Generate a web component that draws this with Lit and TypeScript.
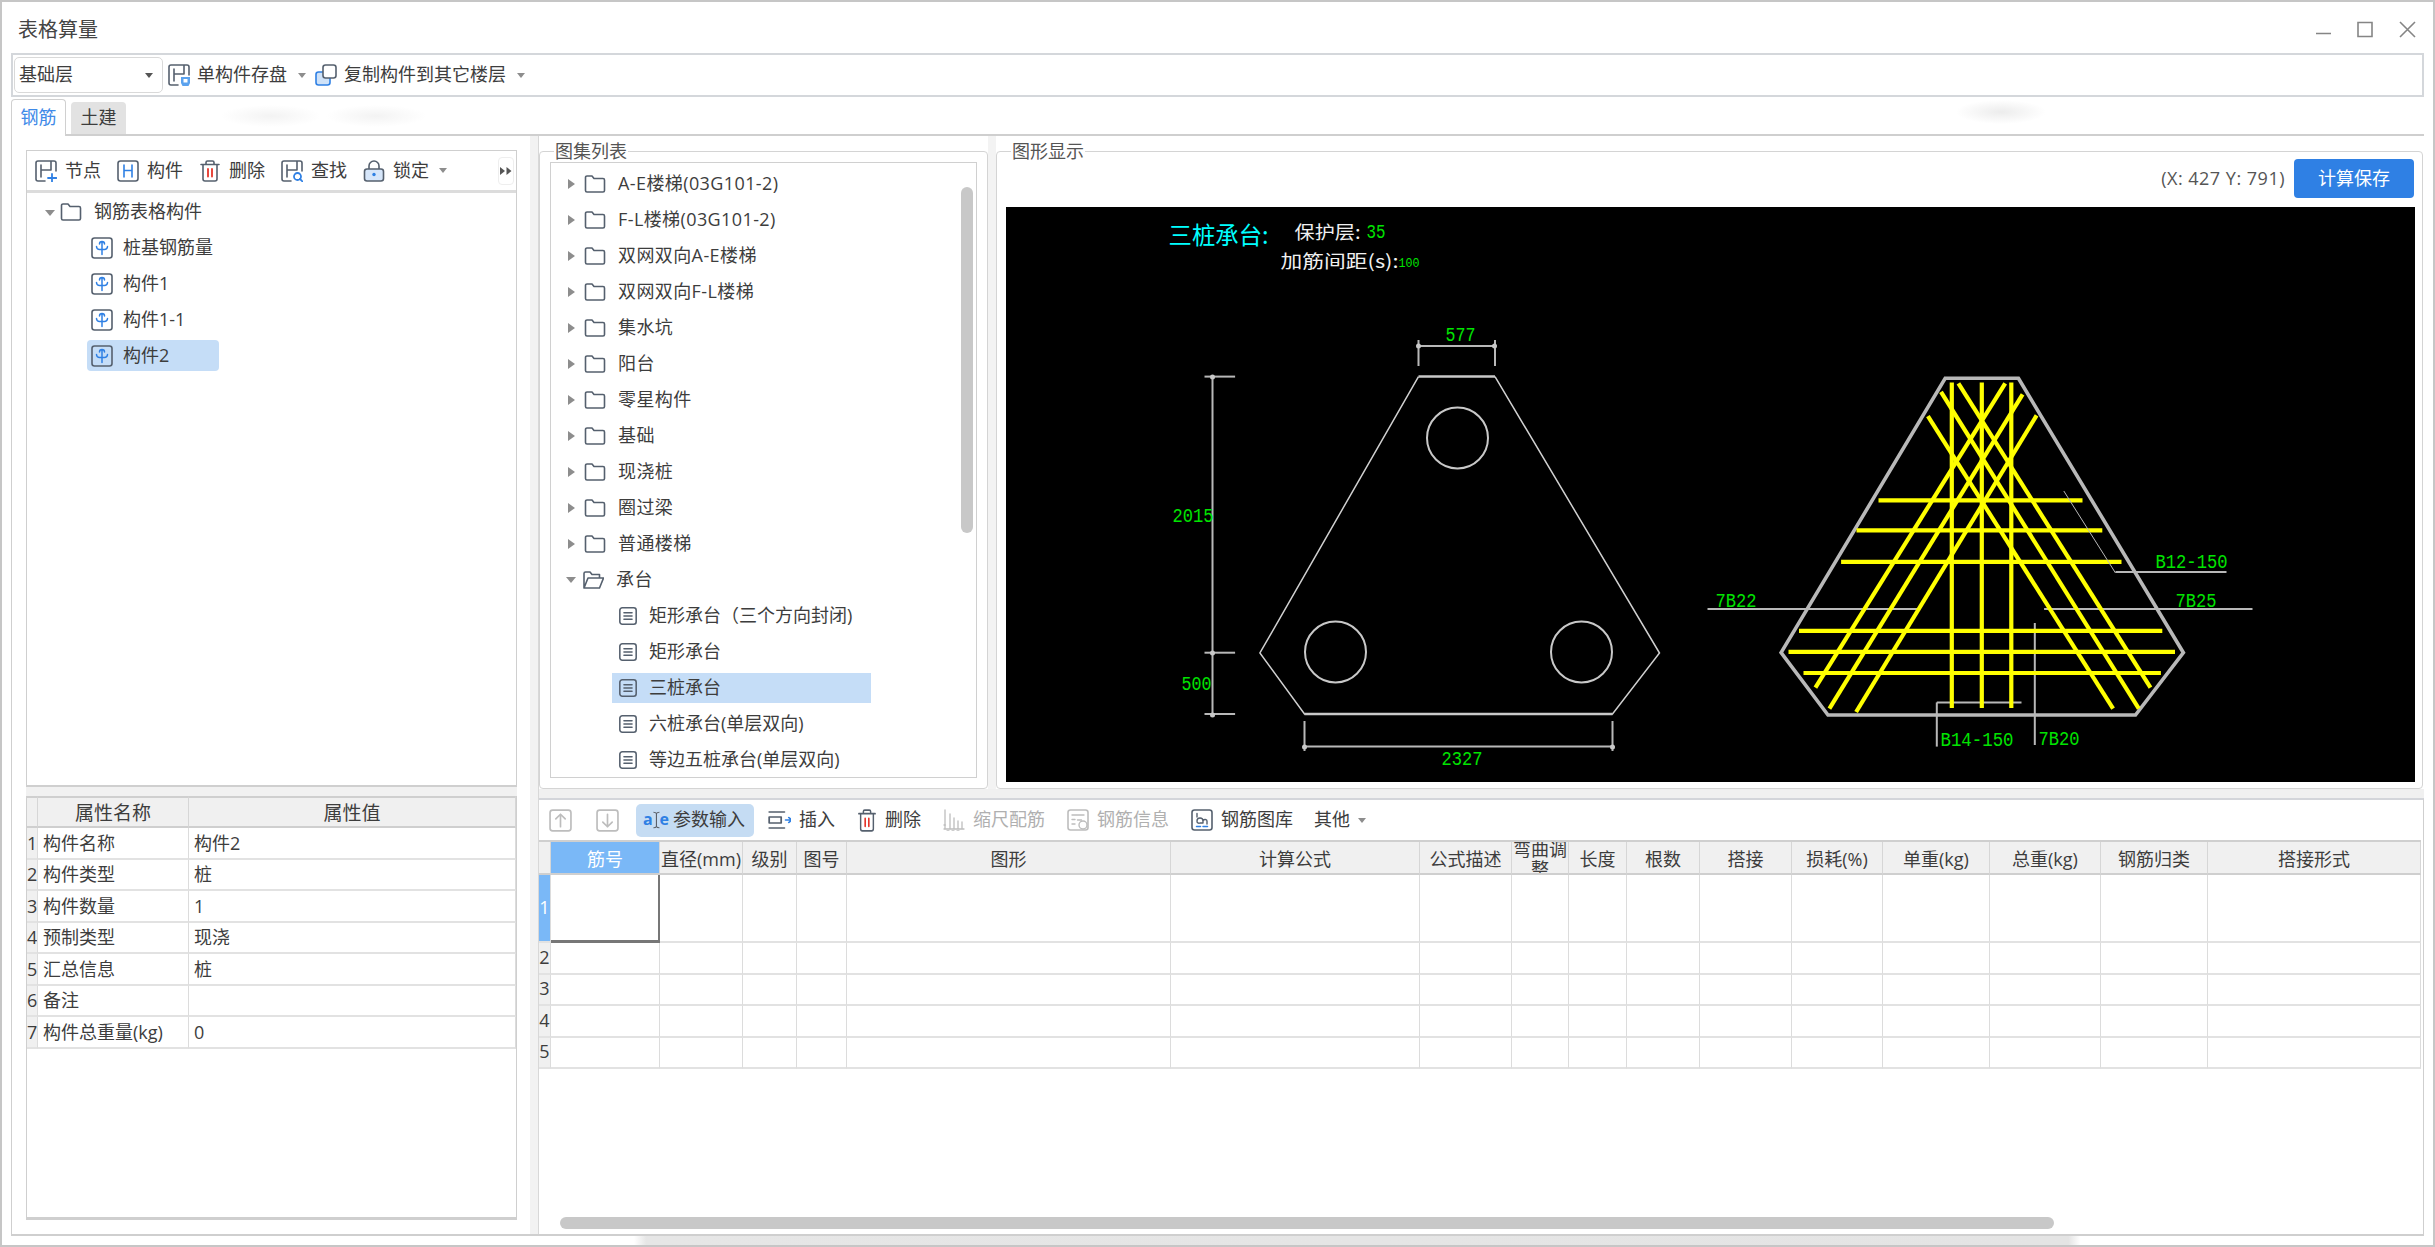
import { LitElement, html, css, svg } from "lit";
import { customElement } from "lit/decorators.js";

const DARK = "#55606e";
const BLUE = "#2f80e4";
const RED = "#e5352b";
const LIGHT = "#bdbdbd";

const stroke = (c: string, w = 1.6) => `fill:none;stroke:${c};stroke-width:${w};stroke-linecap:round;stroke-linejoin:round`;

// toolbar and tree icons, all drawn on a 22 box unless the caller changes the size
const ICONS: Record<string, unknown> = {
  node: svg`<path style=${stroke(DARK)} d="M10 21H3a2 2 0 0 1-2-2V3a2 2 0 0 1 2-2h16a2 2 0 0 1 2 2v8M6 5v12M6 10h10M16 1v9"/><path style=${stroke(BLUE, 1.8)} d="M17 14v8M13 18h8.5"/>`,
  comp: svg`<rect x="1" y="1" width="20" height="20" rx="2.5" style=${stroke(DARK)}/><path style=${stroke(BLUE)} d="M7 5v12M15 5v12M7 10.5h8"/>`,
  trash: svg`<path style=${stroke(DARK)} d="M7 4V2.5A1.5 1.5 0 0 1 8.5 1h5A1.5 1.5 0 0 1 15 2.5V4M2 4.500h18M4 4.500V19a2 2 0 0 0 2 2h10a2 2 0 0 0 2-2V4.500"/><path style=${stroke(RED, 1.8)} d="M9 9v7.5M13 9v7.5"/>`,
  find: svg`<path style=${stroke(DARK)} d="M10 21H3a2 2 0 0 1-2-2V3a2 2 0 0 1 2-2h16a2 2 0 0 1 2 2v8M6 5v12M6 10h10M16 1v9"/><circle cx="16.5" cy="16.5" r="3.5" style=${stroke(BLUE, 1.8)}/><path style=${stroke(BLUE, 1.8)} d="M19 19l2.5 2.5"/>`,
  lock: svg`<path style=${stroke(DARK)} d="M6 9V6a5 5 0 0 1 10 0v3"/><rect x="1.5" y="9" width="19" height="12" rx="2.5" fill="#d6e6fa" stroke=${DARK} stroke-width="1.6"/><circle cx="11" cy="14.5" r="1.7" fill=${BLUE}/>`,
  save: svg`<path style=${stroke(DARK)} d="M10 21H3a2 2 0 0 1-2-2V3a2 2 0 0 1 2-2h16a2 2 0 0 1 2 2v8M6 5v12M6 10h10M16 1v9"/><path fill="#5ba2ee" d="M13 13h9v6l-1.5 3h-6L13 19z"/><rect x="15.5" y="15" width="4" height="3.5" fill="#fff"/>`,
  copy: svg`<rect x="1" y="8" width="14" height="13" rx="2.5" fill="#cfe2f8" stroke=${BLUE} stroke-width="1.6"/><rect x="8" y="1" width="13" height="13" rx="2.5" fill="#fff" stroke=${DARK} stroke-width="1.6"/>`,
  leaf: svg`<rect x="1" y="1" width="20" height="20" rx="2.5" style=${stroke(DARK)}/><path style=${stroke(BLUE, 1.5)} d="M11 5v12.5M5.500 9.500a3 3 0 0 0 3 3h5a3 3 0 0 0 3-3M8.500 7a2.500 2.500 0 0 1 5 0"/>`,
  folder: svg`<path style=${stroke(DARK)} d="M1.500 6v11.500a1.500 1.500 0 0 0 1.500 1.500h16a1.500 1.500 0 0 0 1.500-1.500V7A1.500 1.500 0 0 0 19 5.500H10L8 3H3A1.500 1.500 0 0 0 1.500 4.500z"/>`,
  open: svg`<path style=${stroke(DARK)} d="M2 19V4.500A1.500 1.500 0 0 1 3.500 3H8l2 2.500h7.500V9M2 19h15.500L21.500 9H6z"/>`,
  doc: svg`<rect x="1" y="1" width="20" height="20" rx="3" style=${stroke(DARK, 1.9)}/><path style=${stroke(DARK, 1.7)} d="M6 7h10M6 11h10M6 15h10"/>`,
  up: svg`<rect x="1" y="1" width="20" height="20" rx="2.5" style=${stroke(LIGHT)}/><path style=${stroke(LIGHT)} d="M11 17V5M6.500 9.500L11 5l4.500 4.500"/>`,
  down: svg`<rect x="1" y="1" width="20" height="20" rx="2.5" style=${stroke(LIGHT)}/><path style=${stroke(LIGHT)} d="M11 5v12M6.500 12.500L11 17l4.500-4.500"/>`,
  insert: svg`<path style=${stroke(DARK)} d="M2 3h14M2 8h11v6H2zM2 19h14"/><path style=${stroke(BLUE)} d="M17 11h5M20 8.500l2.500 2.500-2.500 2.500"/>`,
  scale: svg`<path style=${stroke(LIGHT, 1.3)} d="M2 1v18M7 5v14M11 9v10M15 12v7M19 13v6M1 16h1.500M1 20h20" /><path style=${stroke(LIGHT, 1.3)} d="M4 22h2M9 22h2M14 22h2"/>`,
  info: svg`<rect x="1" y="1" width="20" height="20" rx="2.5" style=${stroke(LIGHT)}/><path style=${stroke(LIGHT, 1.4)} d="M5 6h12M5 10.500h3M5 15h3M10.500 11h4"/><circle cx="16" cy="16" r="4" fill="#fff" stroke=${LIGHT} stroke-width="1.4"/>`,
  lib: svg`<rect x="1" y="1" width="20" height="20" rx="2.5" style=${stroke(DARK)}/><path style=${stroke(DARK, 1.4)} d="M6 12a3 3 0 0 1 6 0v2H9a2 2 0 0 1-3-2M6 4.500V8M12 11.500c1-1.500 4-1.500 4 .5v3"/><path style=${stroke(BLUE, 1.5)} d="M5.500 17.500h4M12 17.500h4.500"/>`,
};

const icon = (name: string, w = 22, h = 22) =>
  html`<svg class="icon" width=${w} height=${h} viewBox="0 0 22 22" preserveAspectRatio="none">${ICONS[name]}</svg>`;

const caret = html`<i class="caret"></i>`;

const FOLDERS = ["A-E楼梯(03G101-2)", "F-L楼梯(03G101-2)", "双网双向A-E楼梯", "双网双向F-L楼梯", "集水坑", "阳台", "零星构件", "基础", "现浇桩", "圈过梁", "普通楼梯"];
const CAPS = ["矩形承台（三个方向封闭)", "矩形承台", "三桩承台", "六桩承台(单层双向)", "等边五桩承台(单层双向)"];
const PARTS = ["桩基钢筋量", "构件1", "构件1-1", "构件2"];
const PROPS = [
  ["构件名称", "构件2"],
  ["构件类型", "桩"],
  ["构件数量", "1"],
  ["预制类型", "现浇"],
  ["汇总信息", "桩"],
  ["备注", ""],
  ["构件总重量(kg)", "0"],
];
const COLS: [string, number][] = [
  ["", 12], ["筋号", 109], ["直径(mm)", 83], ["级别", 54], ["图号", 50], ["图形", 324], ["计算公式", 249],
  ["公式描述", 92], ["弯曲调整", 57], ["长度", 58], ["根数", 73], ["搭接", 92], ["损耗(%)", 91],
  ["单重(kg)", 107], ["总重(kg)", 111], ["钢筋归类", 107], ["搭接形式", 213],
];

// every dimension label of the CAD drawing: text, left edge, width, vertical centre, size
const LABELS: [string, number, number, number, number][] = [
  ["577", 1445, 30, 335, 21],
  ["2015", 1172, 41, 516, 21],
  ["500", 1181, 30, 684, 21],
  ["2327", 1441, 41, 759, 21],
  ["B12-150", 2155, 72, 562, 21],
  ["7B22", 1715, 41, 601, 21],
  ["7B25", 2175, 41, 601, 21],
  ["7B20", 2038, 41, 739, 21],
  ["B14-150", 1940, 73, 740, 21],
  ["35", 1366, 19, 232, 21],
  ["100", 1398, 21, 263, 13],
];

const YELLOW: number[][] = [
  [1951.3, 382.5, 1951.3, 708], [1981.3, 382.5, 1981.3, 708], [2010.8, 382.5, 2010.8, 708],
  [1927.4, 416.2, 2112.6, 708.7], [1940.5, 391.8, 2138.3, 708.7], [1957.9, 383.4, 2150, 687.7],
  [2004.7, 383.4, 1814.9, 687.7], [2022.1, 394.3, 1828.9, 708.7], [2036.1, 415.4, 1855.6, 712],
  [1878, 500.4, 2082, 500.4], [1856, 530.3, 2101.8, 530.3], [1840.6, 561.8, 2121, 561.8],
  [1798.5, 630.8, 2161.8, 630.8], [1788, 651.9, 2174.5, 651.9], [1803, 673, 2160.4, 673],
];

const GRAY: number[][] = [
  [1418, 346, 1494.5, 346], [1418, 340, 1418, 366], [1494.5, 340, 1494.5, 366],
  [1212, 376.6, 1212, 715], [1204, 376.6, 1234.6, 376.6], [1204, 652.7, 1234.6, 652.7], [1204, 714, 1234.6, 714],
  [1304, 721, 1304, 751], [1612, 721, 1612, 751], [1304, 746.6, 1612, 746.6],
  [1707, 609, 1919, 609], [2043.6, 609, 2252, 609], [2034.3, 623, 2034.3, 745],
  [2115, 572, 2226, 572], [1936.3, 702.4, 1936.3, 746.6], [1936.3, 702.4, 2021, 702.4],
];

const DOTS = [[1418, 346], [1494, 346], [1212, 377], [1212, 653], [1212, 715], [1304, 747], [1612, 747]];

@customElement("app-root")
export class AppRoot extends LitElement {
  static styles = css`
    :host {
      display: block;
      width: 100vw;
      height: 100vh;
      font: 18px/1.2 "Open Sans", "Noto Sans CJK SC", sans-serif;
      color: #3d3d3d;
    }
    * { box-sizing: border-box; }
    .icon { flex: none; display: block; }
    .caret {
      flex: none;
      width: 0;
      height: 0;
      border: 4px solid transparent;
      border-top: 5px solid #8d8d8d;
      border-bottom: 0;
    }

    .window {
      height: 100%;
      display: flex;
      flex-direction: column;
      background: #fff;
      border: 2px solid #c6c6c6;
    }
    .title {
      flex: none;
      height: 51px;
      display: flex;
      align-items: center;
      justify-content: space-between;
      padding: 4px 17px 0 16px;
      font-size: 20px;
      color: #444;
    }

    .topbar {
      flex: none;
      height: 44px;
      margin: 0 9px;
      padding-left: 1px;
      display: flex;
      align-items: center;
      border: 2px solid #d4d7db;
    }
    .select {
      width: 149px;
      height: 36px;
      display: flex;
      align-items: center;
      justify-content: space-between;
      padding: 0 9px 0 4px;
      margin-right: 5px;
      border: 1px solid #d9d9d9;
      border-radius: 5px;
    }
    .select .caret { border-top-color: #555; }
    .tool { display: flex; align-items: center; gap: 7px; white-space: nowrap; }
    .topbar .tool .caret { margin-left: 4px; }
    .topbar .tool + .tool { margin-left: 9px; }

    .tabs {
      flex: none;
      height: 38px;
      margin: 1px 9px 0;
      padding-top: 1px;
      display: flex;
      align-items: flex-end;
      gap: 5px;
      border-bottom: 2px solid #cfcfcf;
      background:
        radial-gradient(ellipse 50px 11px at 260px 18px, #f3f3f3, transparent),
        radial-gradient(ellipse 50px 11px at 365px 18px, #f3f3f3, transparent),
        radial-gradient(ellipse 45px 12px at 1990px 14px, #ececec, transparent);
    }
    .tab {
      width: 55px;
      height: 32px;
      display: flex;
      align-items: center;
      justify-content: center;
      background: #e2e2e2;
      border-radius: 4px 4px 0 0;
    }
    .tab.on {
      height: 37px;
      margin-bottom: -2px;
      background: #fff;
      color: #3f8ae8;
      border: 1px solid #d0d0d0;
      border-bottom: 0;
    }

    .body {
      flex: 1;
      min-height: 0;
      margin: 0 9px;
      display: flex;
      border-left: 1px solid #cfcfcf;
      border-bottom: 2px solid #cfcfcf;
    }
    .left {
      flex: none;
      width: 518px;
      padding: 14px 13px 14px 14px;
      display: flex;
      flex-direction: column;
    }
    .splitter {
      flex: none;
      width: 9px;
      background: #f2f2f2;
      border-right: 1px solid #d8d8d8;
    }
    .right { flex: 1; min-width: 0; display: flex; flex-direction: column; }

    .treepanel {
      flex: none;
      height: 637px;
      border: 1px solid #cfcfcf;
      border-bottom-width: 2px;
    }
    .treetools {
      height: 42px;
      padding-left: 8px;
      display: flex;
      align-items: center;
      gap: 16px;
      border-bottom: 3px solid #dcdcdc;
    }
    .treetools .tool { gap: 8px; }
    .treetools .caret { margin-left: 2px; }
    .more {
      width: 16px;
      height: 28px;
      margin-left: auto;
      margin-right: 2px;
      display: flex;
      align-items: center;
      justify-content: center;
      border: 1px solid #eee;
      border-radius: 4px;
    }
    .root {
      height: 36px;
      margin: 1px 0 2px;
      padding-left: 18px;
      display: flex;
      align-items: center;
    }
    .root .caret {
      margin-right: 5px;
      margin-top: 2px;
      border-width: 5px;
      border-bottom: 0;
      border-top-width: 6px;
    }
    .root .icon { margin-right: 12px; }
    .part {
      width: 132px;
      height: 31px;
      margin: 0 0 5px 60px;
      padding-left: 4px;
      display: flex;
      align-items: center;
      gap: 10px;
      border-radius: 4px;
    }
    .sel { background: #c5ddf7; }

    .band { flex: none; height: 9px; background: #f1f1f1; }
    .proppanel {
      flex: 1;
      min-height: 0;
      border: 1px solid #cfcfcf;
      border-top: 0;
      border-bottom-width: 3px;
    }

    table { table-layout: fixed; border-collapse: separate; border-spacing: 0; }
    th, td {
      padding: 0;
      font-weight: 400;
      overflow: hidden;
      white-space: nowrap;
      border-right: 1px solid #dcdcdc;
      border-bottom: 2px solid #e2e2e2;
    }
    th { background: #f0f0f0; border-bottom-color: #cfcfcf; border-right-color: #d6d6d6; }
    .num { background: #f0f0f0; text-align: center; }

    .props { width: 489px; }
    .props th { height: 32px; padding-top: 2px; font-size: 19px; border-top: 2px solid #cfcfcf; }
    .props td { height: 31.5px; padding: 2px 0 0 5px; }
    .props td.num { padding: 2px 0 0; }

    .toprow { flex: none; height: 653px; display: flex; }
    .group {
      position: relative;
      margin-top: 15px;
      border: 1px solid #d4d4d4;
      border-radius: 4px;
    }
    .legend {
      position: absolute;
      top: -12px;
      left: 14px;
      line-height: 22px;
      padding: 0 1px;
      background: #fff;
      color: #555;
    }
    .atlas { flex: none; width: 449px; padding: 10px; }
    .atlas .list {
      position: relative;
      height: 100%;
      padding-top: 3px;
      overflow: hidden;
      border: 1px solid #d0d0d0;
    }
    .row {
      height: 36px;
      padding-left: 17px;
      display: flex;
      align-items: center;
      letter-spacing: 0.4px;
    }
    .row .tri {
      flex: none;
      width: 0;
      height: 0;
      margin-right: 9px;
      border: 5px solid transparent;
      border-left: 7px solid #8d8d8d;
      border-right: 0;
    }
    .row .caret {
      margin-right: 6px;
      margin-left: -2px;
      border-width: 5px;
      border-bottom: 0;
      border-top-width: 6px;
    }
    .row .icon { margin-right: 12px; }
    .leaf {
      width: 259px;
      height: 30px;
      margin: 0 0 6px 61px;
      padding-left: 7px;
      display: flex;
      align-items: center;
      gap: 12px;
      white-space: nowrap;
    }
    .row + .leaf { margin-top: 3px; }
    .vbar {
      position: absolute;
      top: 24px;
      left: 410px;
      width: 12px;
      height: 346px;
      border-radius: 6px;
      background: #c8c8c8;
    }
    .gutter { flex: none; width: 8px; background: #f3f3f3; }
    .graph {
      flex: 1;
      min-width: 0;
      margin-right: 1px;
      padding: 7px 8px 7px 8.5px;
      display: flex;
      flex-direction: column;
    }
    .graphhead {
      flex: none;
      height: 39px;
      margin-bottom: 9px;
      display: flex;
      align-items: center;
      justify-content: flex-end;
      gap: 9px;
      color: #555;
      letter-spacing: 0.5px;
    }
    .save {
      width: 120px;
      height: 39px;
      display: flex;
      align-items: center;
      justify-content: center;
      border-radius: 4px;
      background: #2f80e4;
      color: #fff;
      letter-spacing: 0;
    }
    .cad { flex: none; display: block; width: 1409px; height: 575px; background: #000; }
    .cad text { font-family: "Liberation Mono", monospace; fill: #00e400; dominant-baseline: central; }
    .cad .cn { font-family: "Noto Sans CJK SC", sans-serif; fill: #f0f0f0; }
    .cad .cyan { font-family: "Noto Sans CJK SC", sans-serif; fill: #00ffff; }

    .midband { flex: none; height: 9px; background: #f0f0f0; }
    .bottom {
      position: relative;
      flex: 1;
      min-height: 0;
      border-top: 2px solid #d3d5da;
      border-right: 1px solid #cfcfcf;
    }
    .gridtools {
      height: 40px;
      padding-left: 10px;
      display: flex;
      align-items: center;
      gap: 22px;
    }
    .gridtools .tool { gap: 8px; }
    .gridtools .off { color: #b0b0b0; }
    .gridtools .down { margin-left: 2px; margin-right: -5px; }
    .gridtools .param {
      height: 33px;
      padding: 0 9px 0 7px;
      margin-right: -9px;
      gap: 4px;
      border-radius: 5px;
      background: #c5dcf3;
    }
    .ibeam { flex: none; display: flex; align-items: center; justify-content: space-between; width: 26px; height: 22px; font-size: 16px; font-weight: 700; color: #2f80e4; }
    .ibeam svg { display: block; }
    .gridtools .last { margin-left: -1px; }
    .grid { width: 1882px; border-top: 2px solid #cfcfcf; }
    .grid th { height: 33px; border-bottom-width: 2px; }
    .grid th .wrap {
      height: 31px;
      padding-top: 2px;
      display: flex;
      align-items: center;
      justify-content: center;
      overflow: hidden;
      white-space: normal;
      line-height: 20px;
    }
    .grid td { height: 31.5px; }
    .grid .first td { height: 68px; }
    .grid th.cur, .grid .num.cur { background: #7ab8f7; color: #fff; }
    .grid td.active { border-right: 2px solid #777; border-bottom: 3px solid #777; }
    .hbar {
      position: absolute;
      left: 21px;
      bottom: 5px;
      width: 1494px;
      height: 12px;
      border-radius: 6px;
      background: #c8c8c8;
    }
    .foot { flex: none; height: 9px; background: linear-gradient(90deg, #fff 26%, #e6e6e6 26.5%, #e4e4e4 85%, #fff 85.5%); }
  `;

  render() {
    return html`
      <div class="window">
        <div class="title">
          <span>表格算量</span>
          <svg width="100" height="18" viewBox="0 0 100 18">
            <path d="M0 12.5h15M42 1.500h14v14H42zM84 1l15 15M99 1L84 16" fill="none" stroke="#858585" stroke-width="1.6"/>
          </svg>
        </div>
        <div class="topbar">
          <div class="select"><span>基础层</span>${caret}</div>
          <div class="tool">${icon("save")}<span>单构件存盘</span>${caret}</div>
          <div class="tool">${icon("copy")}<span>复制构件到其它楼层</span>${caret}</div>
        </div>
        <div class="tabs">
          <div class="tab on">钢筋</div>
          <div class="tab">土建</div>
        </div>
        <div class="body">
          <div class="left">
            <div class="treepanel">
              <div class="treetools">
                <div class="tool">${icon("node")}节点</div>
                <div class="tool">${icon("comp")}构件</div>
                <div class="tool">${icon("trash")}删除</div>
                <div class="tool">${icon("find")}查找</div>
                <div class="tool">${icon("lock")}锁定${caret}</div>
                <div class="more">
                  <svg width="12" height="8" viewBox="0 0 12 8"><path d="M0 0l5 4-5 4zM6.500 0l5 4-5 4z" fill="#555"/></svg>
                </div>
              </div>
              <div class="root">${caret}${icon("folder")}<span>钢筋表格构件</span></div>
              ${PARTS.map((p) => html`<div class="part ${p === "构件2" ? "sel" : ""}">${icon("leaf")}<span>${p}</span></div>`)}
            </div>
            <div class="band"></div>
            <div class="proppanel">
              <table class="props">
                <colgroup><col width="11" /><col width="151" /><col width="327" /></colgroup>
                <tr><th></th><th>属性名称</th><th>属性值</th></tr>
                ${PROPS.map(
                  ([k, v], i) => html`<tr><td class="num">${i + 1}</td><td>${k}</td><td>${v}</td></tr>`
                )}
              </table>
            </div>
          </div>
          <div class="splitter"></div>
          <div class="right">
            <div class="toprow">
              <div class="group atlas">
                <span class="legend">图集列表</span>
                <div class="list">
                  ${FOLDERS.map((f) => html`<div class="row"><i class="tri"></i>${icon("folder")}<span>${f}</span></div>`)}
                  <div class="row">${caret}${icon("open")}<span>承台</span></div>
                  ${CAPS.map(
                    (c) => html`<div class="leaf ${c === "三桩承台" ? "sel" : ""}">${icon("doc", 18, 18)}<span>${c}</span></div>`
                  )}
                  <div class="vbar"></div>
                </div>
              </div>
              <div class="gutter"></div>
              <div class="group graph">
                <span class="legend">图形显示</span>
                <div class="graphhead">
                  <span>(X: 427 Y: 791)</span>
                  <div class="save">计算保存</div>
                </div>
                ${this.renderCad()}
              </div>
            </div>
            <div class="midband"></div>
            <div class="bottom">
              <div class="gridtools">
                ${icon("up", 23, 23)}
                <span class="down">${icon("down", 23, 23)}</span>
                <div class="tool param">
                  <span class="ibeam">
                    <span>a</span>
                    <svg width="8" height="22" viewBox="0 0 8 22">
                      <path d="M.5 2c1.500 0 3 .5 3.500 1.500C4.500 2.500 6 2 7.500 2M4 3.500v15M.5 20c1.500 0 3-.5 3.500-1.500.5 1 2 1.500 3.500 1.500" fill="none" stroke="#5a6068" stroke-width="1.3"/>
                    </svg>
                    <span>e</span>
                  </span>
                  参数输入
                </div>
                <div class="tool">${icon("insert", 24, 22)}插入</div>
                <div class="tool">${icon("trash", 20, 23)}删除</div>
                <div class="tool off">${icon("scale")}缩尺配筋</div>
                <div class="tool off">${icon("info")}钢筋信息</div>
                <div class="tool">${icon("lib")}钢筋图库</div>
                <div class="tool last">其他${caret}</div>
              </div>
              <table class="grid">
                <colgroup>${COLS.map(([, w]) => html`<col width=${w} />`)}</colgroup>
                <tr>
                  ${COLS.map(([t], i) => html`<th class=${i === 1 ? "cur" : ""}><div class="wrap">${t}</div></th>`)}
                </tr>
                ${[1, 2, 3, 4, 5].map(
                  (n) => html`<tr class=${n === 1 ? "first" : ""}>
                    <td class="num ${n === 1 ? "cur" : ""}">${n}</td>
                    ${COLS.slice(1).map((_, i) => html`<td class=${n === 1 && i === 0 ? "active" : ""}></td>`)}
                  </tr>`
                )}
              </table>
              <div class="hbar"></div>
            </div>
          </div>
        </div>
        <div class="foot"></div>
      </div>
    `;
  }

  // the CAD view is written in page coordinates, so the viewBox starts where the canvas starts
  renderCad() {
    return html`<svg class="cad" viewBox="1005.5 207 1409 575">
      <text class="cyan" x="1168" y="233" font-size="24" textLength="100" lengthAdjust="spacingAndGlyphs">三桩承台:</text>
      <text class="cn" x="1294" y="231" font-size="18" textLength="66" lengthAdjust="spacingAndGlyphs">保护层:</text>
      <text class="cn" x="1280" y="260" font-size="18" textLength="118" lengthAdjust="spacingAndGlyphs">加筋间距(s):</text>
      <path d="M1418 376.6L1259.4 653L1304 714H1612L1659 653L1494.5 376.6" fill="none" stroke="#d0d0d0" stroke-width="1.5"/>
      <path d="M1418 376.6H1494.5M1304 714H1612" stroke="#c8c8c8" stroke-width="2.5"/>
      ${[[1457, 438], [1335, 652], [1581, 652]].map(
        ([x, y]) => svg`<circle cx=${x} cy=${y} r="30.5" fill="none" stroke="#c8c8c8" stroke-width="2"/>`
      )}
      <path d="M2017.9 378.3L2182.9 652.7L2135 715H1827.5L1780.6 652.7L1944.7 378.3Z" fill="none" stroke="#b8b8b8" stroke-width="3.6"/>
      ${GRAY.map(([a, b, c, d]) => svg`<line x1=${a} y1=${b} x2=${c} y2=${d} stroke="#b8b8b8" stroke-width="2"/>`)}
      ${YELLOW.map(([a, b, c, d]) => svg`<line x1=${a} y1=${b} x2=${c} y2=${d} stroke="#ffff00" stroke-width="4.2"/>`)}
      <path d="M2063.3 491L2115 573" fill="none" stroke="#b8b8b8" stroke-width="1"/>
      ${DOTS.map(([x, y]) => svg`<circle cx=${x} cy=${y} r="2.5" fill="#c8c8c8"/>`)}
      ${LABELS.map(
        ([t, x, w, y, s]) => svg`<text x=${x} y=${y} font-size=${s} textLength=${w} lengthAdjust="spacingAndGlyphs">${t}</text>`
      )}
    </svg>`;
  }
}
